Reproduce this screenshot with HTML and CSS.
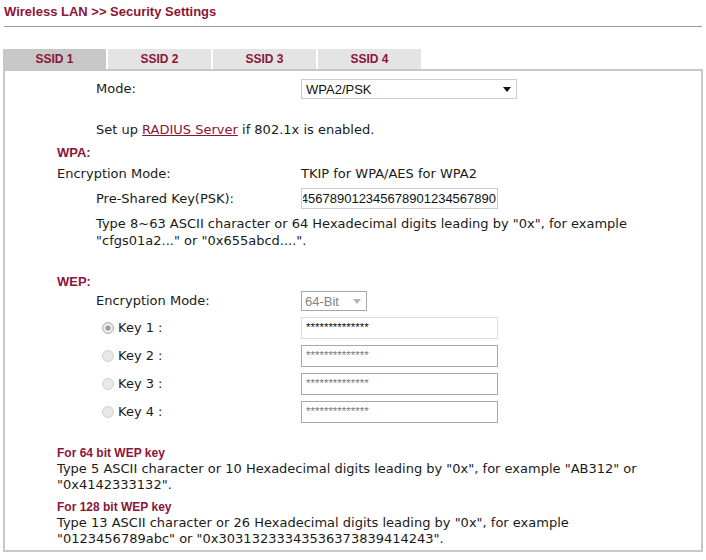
FILE: index.html
```html
<!DOCTYPE html>
<html>
<head>
<meta charset="utf-8">
<title>Wireless LAN &gt;&gt; Security Settings</title>
<link rel="stylesheet" href="styles.css">
</head>
<body>
<div class="title">Wireless LAN &gt;&gt; Security Settings</div>

<div class="tabs">
  <div class="tab active">SSID 1</div>
  <div class="tab">SSID 2</div>
  <div class="tab">SSID 3</div>
  <div class="tab">SSID 4</div>
</div>

<div class="panel">
  <div class="field mode-row">
    <div class="lbl sub">Mode:</div>
    <div class="select wide">
      <span>WPA2/PSK</span>
      <svg class="arrow" width="8" height="5" viewBox="0 0 8 5"><path d="M0 0H8L4 5Z" fill="#111"/></svg>
    </div>
  </div>

  <div class="text sub radius">Set up <a href="#" class="link">RADIUS Server</a> if 802.1x is enabled.</div>

  <div class="head wpa">WPA:</div>

  <div class="field enc-row">
    <div class="lbl main">Encryption Mode:</div>
    <div class="val">TKIP for WPA/AES for WPA2</div>
  </div>

  <div class="field psk-row">
    <div class="lbl sub">Pre-Shared Key(PSK):</div>
    <input class="psk" type="text" value="1234567890123456789012345678901234567890">
  </div>

  <div class="help sub">Type 8~63 ASCII character or 64 Hexadecimal digits leading by "0x", for example<br>"cfgs01a2..." or "0x655abcd....".</div>

  <div class="head wep">WEP:</div>

  <div class="field wepenc-row">
    <div class="lbl sub">Encryption Mode:</div>
    <div class="select small disabled">
      <span>64-Bit</span>
      <svg class="arrow" width="8" height="5" viewBox="0 0 8 5"><path d="M0 0H8L4 5Z" fill="#b4b4b4"/></svg>
    </div>
  </div>

  <div class="keys">
    <div class="field key-row">
      <div class="lbl key">
        <svg class="radio" width="12" height="12" viewBox="0 0 12 12"><circle cx="6" cy="6" r="5.5" fill="#e6e6e6" stroke="#b0b0b0"/><circle cx="6" cy="6" r="3.5" fill="#f6f6f6"/><circle cx="6" cy="6" r="2.6" fill="#9a9a9a"/></svg>
        <span>Key 1 :</span>
      </div>
      <div class="keyin active">**************</div>
    </div>
    <div class="field key-row">
      <div class="lbl key">
        <svg class="radio" width="12" height="12" viewBox="0 0 12 12"><circle cx="6" cy="6" r="5.5" fill="#e8e8e8" stroke="#cfcfcf"/></svg>
        <span>Key 2 :</span>
      </div>
      <div class="keyin">**************</div>
    </div>
    <div class="field key-row">
      <div class="lbl key">
        <svg class="radio" width="12" height="12" viewBox="0 0 12 12"><circle cx="6" cy="6" r="5.5" fill="#e8e8e8" stroke="#cfcfcf"/></svg>
        <span>Key 3 :</span>
      </div>
      <div class="keyin">**************</div>
    </div>
    <div class="field key-row">
      <div class="lbl key">
        <svg class="radio" width="12" height="12" viewBox="0 0 12 12"><circle cx="6" cy="6" r="5.5" fill="#e8e8e8" stroke="#cfcfcf"/></svg>
        <span>Key 4 :</span>
      </div>
      <div class="keyin">**************</div>
    </div>
  </div>

  <div class="note first">
    <div class="note-head">For 64 bit WEP key</div>
    <div class="note-text">Type 5 ASCII character or 10 Hexadecimal digits leading by "0x", for example "AB312" or<br>"0x4142333132".</div>
  </div>
  <div class="note second">
    <div class="note-head">For 128 bit WEP key</div>
    <div class="note-text">Type 13 ASCII character or 26 Hexadecimal digits leading by "0x", for example<br>"0123456789abc" or "0x30313233343536373839414243".</div>
  </div>
</div>
</body>
</html>
```

FILE: styles.css
```css
body {
  margin: 0;
  background: #ffffff;
  color: #1a1a1a;
  font-family: "DejaVu Sans", Verdana, sans-serif;
  font-size: 13px;
}

.title {
  margin: 0 4px 0 4px;
  padding: 4px 0 6px 0;
  line-height: 16px;
  font-family: "Liberation Sans", Arial, sans-serif;
  font-weight: bold;
  font-size: 13px;
  color: #8b1538;
  border-bottom: 1px solid #9a9a9a;
}

.tabs {
  display: flex;
  gap: 2px;
  margin: 22px 0 0 3px;
}

.tab {
  width: 103px;
  height: 20px;
  line-height: 21px;
  text-align: center;
  background: #e4e4e4;
  color: #8b1538;
  font-family: "Liberation Sans", Arial, sans-serif;
  font-weight: bold;
  font-size: 12px;
}

.tab.active {
  background: #c8c8c8;
}

.panel {
  box-sizing: border-box;
  width: 700px;
  margin-left: 3px;
  border: 2px solid #c8c8c8;
  padding: 8px 0 4px 0;
}

.field {
  display: grid;
  grid-template-columns: 296px auto;
  align-items: center;
}

.lbl {
  line-height: 16px;
}

.lbl.sub, .text.sub, .help.sub {
  padding-left: 91px;
}

.lbl.main {
  padding-left: 52px;
}

.lbl.key {
  display: flex;
  align-items: center;
  padding-left: 97px;
  gap: 4px;
}

.radio {
  display: block;
  flex: none;
}

.val {
  line-height: 16px;
}

.mode-row {
  height: 20px;
}

.select {
  box-sizing: border-box;
  height: 20px;
  display: flex;
  align-items: center;
  justify-content: space-between;
  background: #ffffff;
  font-family: "Liberation Sans", Arial, sans-serif;
  font-size: 13px;
}

.select.wide {
  width: 216px;
  border: 1px solid #cccccc;
  padding: 0 5px 0 4px;
  color: #111111;
}

.select.small {
  width: 66px;
  border: 1px solid #a8a8a8;
  padding: 0 5px 0 3px;
  color: #848484;
}

.arrow {
  display: block;
}

.text, .help {
  line-height: 16px;
}

.radius {
  margin-top: 23px;
}

.link {
  color: #8b1538;
  text-decoration: underline;
}

.head {
  padding-left: 52px;
  line-height: 16px;
  font-family: "Liberation Sans", Arial, sans-serif;
  font-weight: bold;
  font-size: 13px;
  color: #8b1538;
}

.wpa {
  margin-top: 7px;
}

.enc-row {
  margin-top: 5px;
}

.psk-row {
  margin-top: 6px;
}

.psk {
  box-sizing: border-box;
  width: 197px;
  height: 21px;
  margin: 0;
  padding: 0 1px;
  border: 1px solid #cccccc;
  border-radius: 0;
  outline: none;
  background: #ffffff;
  direction: rtl;
  font-family: "Liberation Sans", Arial, sans-serif;
  font-size: 13px;
  color: #111111;
}

.help {
  margin-top: 6px;
  line-height: 17px;
}

.wep {
  margin-top: 25px;
}

.wepenc-row {
  margin-top: 1px;
}

.keys {
  display: flex;
  flex-direction: column;
  gap: 6px;
  margin-top: 6px;
}

.key-row .lbl {
  line-height: 16px;
}

.keyin {
  box-sizing: border-box;
  width: 197px;
  height: 22px;
  padding: 3px 0 0 4px;
  background: #ffffff;
  font-family: "Liberation Sans", Arial, sans-serif;
  font-size: 11.5px;
  line-height: 12px;
  border: 1px solid #a8a8a8;
  color: #7a7a7a;
}

.keyin.active {
  border-color: #dcdcdc;
  color: #111111;
}

.note {
  padding-left: 52px;
}

.note.first {
  margin-top: 22px;
}

.note.second {
  margin-top: 7px;
}

.note-head {
  line-height: 16px;
  font-family: "Liberation Sans", Arial, sans-serif;
  font-weight: bold;
  font-size: 12px;
  color: #8b1538;
}

.note-text {
  line-height: 15.5px;
}
```
